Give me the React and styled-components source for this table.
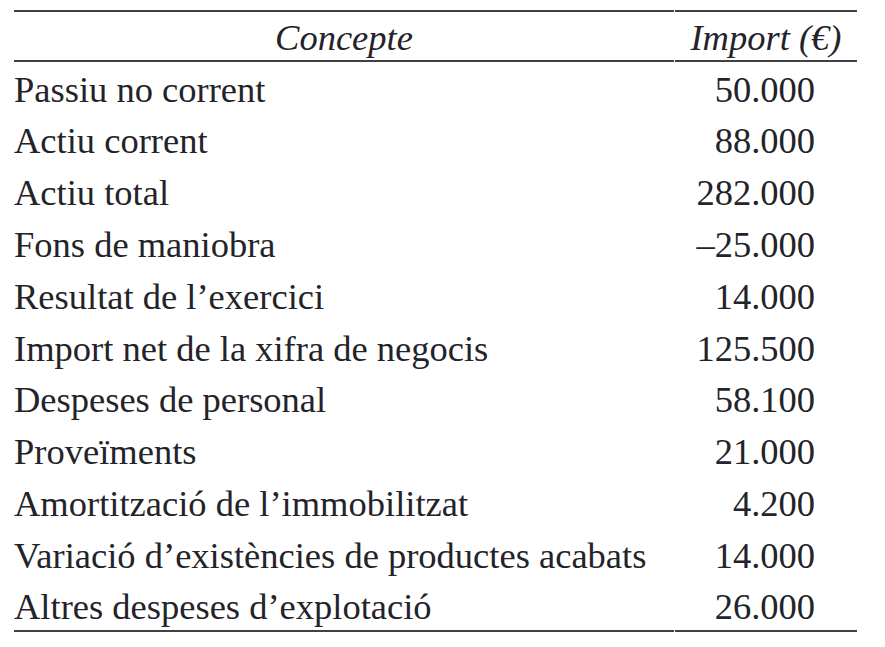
import { styled, createGlobalStyle } from 'styled-components';

const GlobalStyle = createGlobalStyle`
  html, body {
    margin: 0;
    padding: 0;
    background: #ffffff;
  }
`;

const Table = styled.table`
  margin: 10px 0 0 13px;
  width: 845px;
  border-collapse: separate;
  border-spacing: 1px 0;
  font-family: 'Liberation Serif', 'DejaVu Serif', serif;
  font-size: 36.5px;
  color: #232329;
`;

const HeadCell = styled.th`
  height: 44px;
  padding: 4px 0 0;
  font-weight: 400;
  font-style: italic;
  text-align: center;
  line-height: 1;
  border-top: 2px solid #404046;
  border-bottom: 2px solid #404046;
  width: ${(p) => (p.$narrow ? '182px' : 'auto')};
`;

const Row = styled.tr`
  height: 51.8px;
`;

const Cell = styled.td`
  padding: 4px ${(p) => (p.$num ? '42px' : '0')} 0 0;
  text-align: ${(p) => (p.$num ? 'right' : 'left')};
  white-space: nowrap;
  line-height: 1;
  border-bottom: ${(p) => (p.$last ? '2px solid #404046' : 'none')};
`;

const ROWS = [
  ['Passiu no corrent', '50.000'],
  ['Actiu corrent', '88.000'],
  ['Actiu total', '282.000'],
  ['Fons de maniobra', '–25.000'],
  ['Resultat de l’exercici', '14.000'],
  ['Import net de la xifra de negocis', '125.500'],
  ['Despeses de personal', '58.100'],
  ['Proveïments', '21.000'],
  ['Amortització de l’immobilitzat', '4.200'],
  ['Variació d’existències de productes acabats', '14.000'],
  ['Altres despeses d’explotació', '26.000'],
];

function App() {
  return (
    <>
      <GlobalStyle />
      <Table>
        <thead>
          <tr>
            <HeadCell>Concepte</HeadCell>
            <HeadCell $narrow>Import (€)</HeadCell>
          </tr>
        </thead>
        <tbody>
          {ROWS.map(([label, value], i) => {
            const last = i === ROWS.length - 1;
            return (
              <Row key={label}>
                <Cell $last={last}>{label}</Cell>
                <Cell $num $last={last}>
                  {value}
                </Cell>
              </Row>
            );
          })}
        </tbody>
      </Table>
    </>
  );
}

export default App;
